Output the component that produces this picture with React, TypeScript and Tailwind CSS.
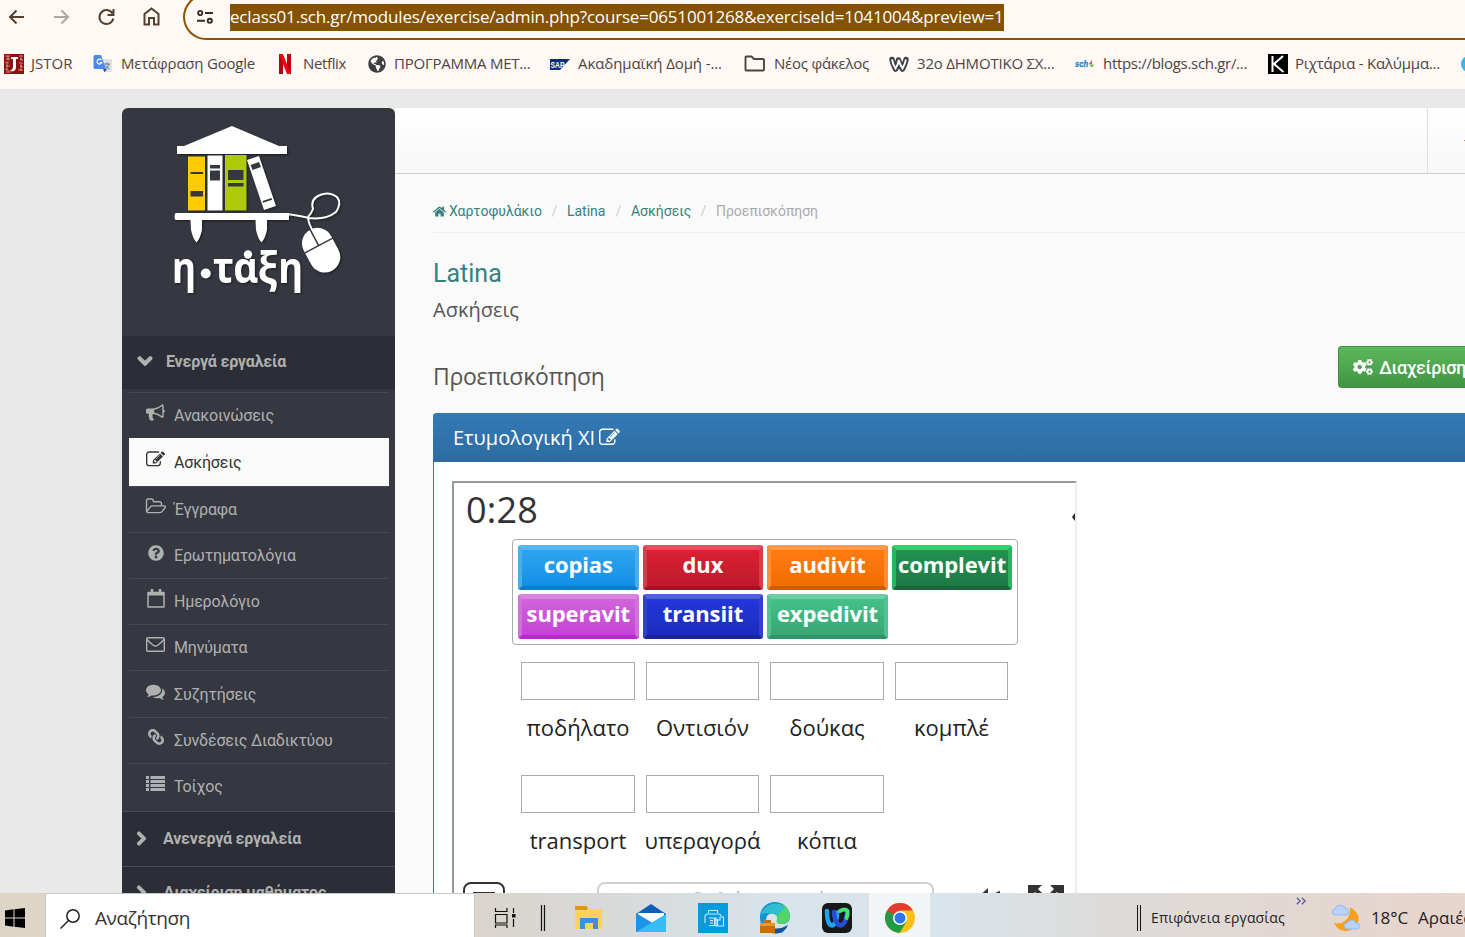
import { FaQuestionCircle, FaChevronDown, FaChevronRight, FaHome, FaCogs, FaLink, FaGlobeAmericas } from 'react-icons/fa';

const PENCIL =
  'M888 1184l116-116-152-152-116 116v56h96v96h56zm440-720q-16-16-33 1l-350 350q-17 17-1 33t33-1l350-350q17-17 1-33zm80 594v190q0 119-84.5 203.5t-203.5 84.5h-832q-119 0-203.5-84.5t-84.5-203.5v-832q0-119 84.5-203.5t203.5-84.5h832q63 0 117 25 15 7 18 23 3 17-9 29l-49 49q-14 14-32 8-23-6-45-6h-832q-66 0-113 47t-47 113v832q0 66 47 113t113 47h832q66 0 113-47t47-113v-126q0-13 9-22l64-64q15-15 35-7t20 29zm-96-738l288 288-672 672h-288v-288zm444 132l-92 92-288-288 92-92q28-28 68-28t68 28l152 152q28 28 28 68t-28 68z';
const BULLHORN =
  'M1664 640q53 0 90.5 37.5t37.5 90.5-37.5 90.5-90.5 37.5v384q0 52-38 90t-90 38q-417-347-812-380-58 19-91 66t-31 100.5 40 92.5q-20 33-23 65.5t6 58 33.5 55 48 50 61.5 50.5q-29 58-111.5 83t-168.5 11.5-132-55.5q-7-23-29.5-87.5t-32-94.5-23-89-15-101 3.5-98.5 22-110.5h-122q-66 0-113-47t-47-113v-192q0-66 47-113t113-47h480q435 0 896-384 52 0 90 38t38 90v384zm-128 604v-954q-394 302-768 343v270q377 42 768 341z';
const FOLDER =
  'M1845 931q0-35-53-35h-1088q-40 0-85.5 21.5t-71.5 52.5l-294 363q-18 24-18 40 0 35 53 35h1088q40 0 86-22t71-53l294-363q18-22 18-39zm-1141-163h768v-160q0-40-28-68t-68-28h-576q-40 0-68-28t-28-68v-64q0-40-28-68t-68-28h-320q-40 0-68 28t-28 68v853l256-315q44-53 116-87.5t140-34.5zm1269 163q0 62-46 120l-295 363q-43 53-116 87.5t-140 34.5h-1088q-92 0-158-66t-66-158v-960q0-92 66-158t158-66h320q92 0 158 66t66 158v32h544q92 0 158 66t66 158v160h192q54 0 99 24.5t67 70.5q15 32 15 68z';
const COMMENTS =
  'M1408 768q0 139-94 257t-256.5 186.5-353.5 68.5q-86 0-176-16-124 88-278 128-36 9-86 16h-3q-11 0-20.5-8t-11.5-21q-1-3-1-6.5t.5-6.5 2-6l2.5-5 3.5-5.5 4-5 4.5-5 4-4.5q5-6 23-25t26-29.5 22.5-29 25-38.5 20.5-44q-124-72-195-177t-71-224q0-139 94-257t256.5-186.5 353.5-68.5 353.5 68.5 256.5 186.5 94 257zm384 256q0 120-71 224.5t-195 176.5q10 24 20.5 44t25 38.5 22.5 29 26 29.5 23 25q1 1 4 4.5t4.5 5 4 5 3.5 5.5l2.5 5 2 6 .5 6.5-1 6.5q-3 14-13 22t-22 7q-50-7-86-16-154-40-278-128-90 16-176 16-271 0-472-132 58 4 88 4 161 0 309-45t264-129q125-92 192-212t67-254q0-77-23-152 129 71 204 178t75 230z';

function Glyph({ d, vb = '0 0 1792 1792', c = 'w-[19px] h-[19px]' }: { d: string; vb?: string; c?: string }) {
  return <svg viewBox={vb} className={c} fill="currentColor"><path d={d} /></svg>;
}

const bookmarks = [
  { w: 'w-[89px]', p: 'w-[27px]', ls: '', t: 'JSTOR', i: (
    <svg viewBox="0 0 20 20" className="w-5 h-5"><rect width="20" height="20" fill="#8c1014" /><g stroke="#e5b5a8" strokeWidth="1" fill="none" opacity=".75"><path d="M1 2h5M2 5h4M1 8l4 1M2 12h4M1 15l4 2M15 2h4M16 5l3 1M15 9h4M16 12l3 1M14 16h5M2 18h5M4 2v5M17 3v4M3 9v7M17 10v7" /></g><path d="M7 3h7v2h-2v8q0 4-4 4.500l-2-1q3-1 3-4V5H7z" fill="#fff" /></svg>) },
  { w: 'w-[183px]', p: 'w-[28px]', ls: 'tracking-[-0.21px]', t: 'Μετάφραση Google', i: (
    <svg viewBox="0 0 20 20" className="w-5 h-5"><path d="M8 5h10q1 0 1 1v11q0 1-1 1h-6z" fill="#e0e0e0" /><path d="M11 10h6M14 8.500v2M16 10q-1 4-4 5M12.500 11.500q1 2 4 3.500" stroke="#607d8b" fill="none" /><path d="M2 1h6l5 14H2q-1.500 0-1.500-1.500v-11Q.5 1 2 1z" fill="#4a87ee" /><path d="M10 15h4l-2.500 3.500z" fill="#3a4fb5" /><path d="M8.500 6a2.500 2.500 0 1 0 .4 2.500H6.500" stroke="#fff" strokeWidth="1.200" fill="none" /></svg>) },
  { w: 'w-[92px]', p: 'w-[27px]', ls: 'tracking-[-0.36px]', t: 'Netflix', i: (
    <svg viewBox="0 0 20 20" className="w-5 h-5"><path d="M3 0h4v20l-4 .4zM11 0h4v20.400l-4-.4z" fill="#b1060f" /><path d="M3 0h4l8 20.400-4-.4z" fill="#e50914" /></svg>) },
  { w: 'w-[182px]', p: 'w-[26px]', ls: 'tracking-[-0.24px]', t: 'ΠΡΟΓΡΑΜΜΑ ΜΕΤ...', i: <FaGlobeAmericas className="w-[18px] h-[18px] text-[#3c4043]" /> },
  { w: 'w-[194px]', p: 'w-[28px]', ls: 'tracking-[-0.1px]', t: 'Ακαδημαϊκή Δομή -...', i: (
    <svg viewBox="0 0 20 11" className="w-5 h-[11px]"><path d="M0 0h20L10 11H0z" fill="#0b2a8c" /><text x="0.500" y="8.500" fontSize="8.500" fontWeight="bold" fill="#fff" fontFamily="Liberation Sans" textLength="14" lengthAdjust="spacingAndGlyphs">SAP</text></svg>) },
  { w: 'w-[145px]', p: 'w-[30px]', ls: 'tracking-[-0.24px]', t: 'Νέος φάκελος', i: (
    <svg viewBox="0 0 22 18" className="w-[22px] h-[18px]" fill="none" stroke="#4d4540" strokeWidth="1.900"><path d="M1.500 14.500v-12q0-1 1-1h5l2.500 2.500h9q1 0 1 1v9.500q0 1-1 1H2.500q-1 0-1-1z" /></svg>) },
  { w: 'w-[186px]', p: 'w-[28px]', ls: 'tracking-[-0.2px]', t: '32ο ΔΗΜΟΤΙΚΟ ΣΧ...', i: (
    <svg viewBox="0 0 20 16" className="w-5 h-4" fill="none" stroke="#3d4247"><path d="M3 3.500q1 5 3.500 9.500Q9 9 9.500 4Q11 9 13.500 13q2.500-4.500 3.500-9.500" strokeWidth="5.500" strokeLinejoin="round" strokeLinecap="round" /><path d="M3 3.500q1 5 3.500 9Q9 9 9.700 4Q11 9 13.500 12.500q2.500-4.500 3.500-9" stroke="#fff" strokeWidth="1.900" /></svg>) },
  { w: 'w-[193px]', p: 'w-[28px]', ls: 'tracking-[-0.31px]', t: 'https://blogs.sch.gr/...', i: (
    <svg viewBox="0 0 20 10" className="w-5 h-[10px]"><text x="0" y="8" fontSize="9" fontStyle="italic" fontWeight="bold" fill="#1c86c0" stroke="#1c86c0" strokeWidth=".3" fontFamily="Liberation Sans" textLength="13" lengthAdjust="spacingAndGlyphs">sch</text><path d="M14 5l3-4v4z" fill="#e8503a" /><path d="M14 5.500h5l-2 3z" fill="#6db33f" /></svg>) },
  { w: 'w-[193px]', p: 'w-[27px]', ls: 'tracking-[-0.21px]', t: 'Ριχτάρια - Καλύμμα...', i: (
    <svg viewBox="0 0 20 20" className="w-5 h-5"><rect width="20" height="20" fill="#000" /><path d="M4.500 2v16M15 2L6 10l9.500 8" stroke="#fff" strokeWidth="2" fill="none" /></svg>) },
];

const items = [
  { t: 'Ανακοινώσεις', i: <Glyph d={BULLHORN} /> },
  { t: 'Ασκήσεις', active: true, i: <Glyph d={PENCIL} /> },
  { t: 'Έγγραφα', i: <Glyph d={FOLDER} vb="0 0 2048 1792" c="w-[22px] h-[19px] shrink-0" /> },
  { t: 'Ερωτηματολόγια', i: <FaQuestionCircle className="w-4 h-4" /> },
  { t: 'Ημερολόγιο', i: (
    <svg viewBox="0 0 18 19" className="w-[18px] h-[19px]" fill="none" stroke="currentColor"><path d="M1 3.500h16v14.500H1z" strokeWidth="1.500" strokeLinejoin="round" /><path d="M1 5h16" strokeWidth="3" /><path d="M5 .8v4M13 .8v4" strokeWidth="2.600" strokeLinecap="round" /></svg>) },
  { t: 'Μηνύματα', i: (
    <svg viewBox="0 0 19 15" className="w-[19px] h-[15px]" fill="none" stroke="currentColor" strokeWidth="1.400"><rect x=".7" y=".7" width="17.600" height="13.600" rx="1.200" /><path d="M1 2.500Q3 5 7 8q2.500 2.200 5 0 4-3 6-5.500" /></svg>) },
  { t: 'Συζητήσεις', i: <Glyph d={COMMENTS} /> },
  { t: 'Συνδέσεις Διαδικτύου', i: <FaLink className="w-4 h-4 -scale-x-100" /> },
  { t: 'Τοίχος', i: (
    <svg viewBox="0 0 19 15" className="w-[19px] h-[15px]" fill="currentColor"><path d="M0 0h3v3H0zM4.500 0H19v3H4.500zM0 4h3v3H0zM4.500 4H19v3H4.500zM0 8h3v3H0zM4.500 8H19v3H4.500zM0 12h3v3H0zM4.500 12H19v3H4.500z" /></svg>) },
];

const tiles = [
  { t: 'copias', c: 'from-[#2fa3ef] to-[#1090e6] border-t-[#58b6f2] border-x-[#49aeee] border-b-[#0f7ccb]' },
  { t: 'dux', c: 'from-[#dd1f33] to-[#bd1b2d] border-t-[#e74d5e] border-x-[#db3a4b] border-b-[#a01524]' },
  { t: 'audivit', c: 'from-[#ff7c12] to-[#f26c00] border-t-[#ff9a48] border-x-[#ff8d33] border-b-[#d05c00]' },
  { t: 'complevit', c: 'from-[#239150] to-[#1e7a44] border-t-[#33d06d] border-x-[#29b55d] border-b-[#1a6539]' },
  { t: 'superavit', c: 'from-[#d063da] to-[#c543d6] border-t-[#da84e2] border-x-[#d172dc] border-b-[#b928cf]' },
  { t: 'transiit', c: 'from-[#2237dd] to-[#1c2dba] border-t-[#4f5fe5] border-x-[#3040d4] border-b-[#17249a]' },
  { t: 'expedivit', c: 'from-[#45c088] to-[#38a775] border-t-[#6bcfa2] border-x-[#4fc491] border-b-[#2f9468]' },
];
const targets = ['ποδήλατο', 'Οντισιόν', 'δούκας', 'κομπλέ', 'transport', 'υπεραγορά', 'κόπια'];

function Logo() {
  return (
    <svg viewBox="120 100 280 240" className="w-[280px] h-[240px] shrink-0 -mt-2 -ml-0.5 drop-shadow-[1px_1px_1px_rgba(0,0,0,.5)]">
      <path d="M177 146h7l48-20 47 20h8v8H177z" fill="#fff" />
      <rect x="188" y="156.500" width="17" height="54" fill="#ffcb05" /><path d="M190.500 172h12.500v2h-12.500zM190.500 191h12.500v5.500h-12.500z" fill="#363841" />
      <rect x="207.500" y="155.500" width="15" height="55" fill="#fff" /><path d="M210 165h10v3.500h-10zM210 170.500h10v10h-10z" fill="#363841" />
      <rect x="225" y="155" width="21.500" height="55.500" fill="#afca0b" /><path d="M228 170h15.500v10H228zM228 183h15.500v3.500H228z" fill="#363841" />
      <path d="M247 160l12-4 17 50-12 4z" fill="#fff" /><path d="M250.500 165l8.500-3 2 5-8.500 3zM262.500 201l9-3 .6 1.800-9 3z" fill="#363841" />
      <path d="M175.500 213H289v7H175.500q-2-3.500 0-7zM190.500 220H202v10q-2 9-5.500 12.500Q193 239 191 230zM255.500 220H267v10q-2 9-5.500 12.500Q258 239 256 230z" fill="#fff" />
      <path d="M287 214q14 2 22 4 17 2 27-6 6-9 1-15-8-6-17-2-10 4-7 14-2 5-5 8 0 6 6 16" stroke="#fff" strokeWidth="2" fill="none" />
      <g transform="rotate(-28 321 250)"><rect x="305.500" y="227" width="31" height="46.500" rx="15.500" fill="#fff" /><path d="M305 245h32M321 226v19" stroke="#363841" strokeWidth="1.500" /></g>
      <g fill="#fff" fontFamily="Noto Sans" fontWeight="700">
        <text x="172" y="282.500" fontSize="43" textLength="24" lengthAdjust="spacingAndGlyphs">η</text>
        <circle cx="205.800" cy="273.500" r="5" />
        <text x="213" y="282.500" fontSize="43" textLength="90" lengthAdjust="spacingAndGlyphs">ταξη</text>
        <circle cx="248" cy="254.500" r="4.200" />
      </g>
    </svg>
  );
}

export default function App() {
  return (
    <div className="flex h-[937px] w-[1465px] flex-col overflow-hidden whitespace-nowrap bg-[#e9e9e9] font-['Roboto',sans-serif]">
      <header className="h-[89px] shrink-0 bg-[#fff8f5] font-['Open_Sans',sans-serif]">
        <div className="flex h-10 items-start">
          <div className="flex h-[33px] w-[183px] items-center text-[#54402f]">
            <svg viewBox="0 0 183 33" className="h-[33px] w-[183px]" fill="none" stroke="currentColor" strokeWidth="2">
              <path d="M24 17H10.500M16.500 10.500L10 17l6.500 6.500" />
              <path d="M54 17h13.500M61.500 10.500L68 17l-6.500 6.500" stroke="#b0a5a0" />
              <path d="M112.500 13.500a7 7 0 1 0 .8 5M113.500 9v6h-6" />
              <path d="M144.500 24.500V14l7-5.500 7 5.500v10.500h-4.500v-6.500h-5v6.500z" />
            </svg>
          </div>
          <div className="-mt-[6px] flex h-[46px] flex-1 items-center rounded-l-[23px] border-2 border-r-0 border-[#8a5500] pl-3">
            <svg viewBox="0 0 16 16" className="mr-[17px] h-4 w-4" fill="none" stroke="#3a2c20" strokeWidth="1.900"><circle cx="3.200" cy="4" r="2.100" /><path d="M8 4h8M0 11.800h8" /><circle cx="12.800" cy="11.800" r="2.100" /></svg>
            <span className="mt-px flex h-[27px] w-[774px] items-center bg-[#855200] pb-0.5 text-[17px] tracking-[-0.18px] text-white">
              eclass01.sch.gr/modules/exercise/admin.php?course=0651001268&amp;exerciseId=1041004&amp;preview=1
            </span>
          </div>
        </div>
        <div className="flex h-12 items-center pl-1 text-[15px] text-[#4d4540]">
          {bookmarks.map((b) => (
            <div key={b.t} className={`flex shrink-0 items-center ${b.w}`}>
              <span className={`flex shrink-0 ${b.p}`}>{b.i}</span>
              <span className={`-mt-0.5 ${b.ls}`}>{b.t}</span>
            </div>
          ))}
          <span className="h-4 w-4 shrink-0 rounded-full bg-[#35b6e6]" />
        </div>
      </header>

      <div className="flex h-[804px] shrink-0 overflow-hidden pl-[122px] pt-[19px]">
        <aside className="flex w-[273px] shrink-0 flex-col overflow-hidden rounded-t-md bg-[#363841] text-[#b0b0b0]">
          <div className="h-[228px] shrink-0 overflow-hidden"><Logo /></div>
          <div className="flex h-[53px] shrink-0 items-center bg-[#2b2e36] pb-0.5 pl-[15px] text-base font-bold tracking-[-0.2px]">
            <FaChevronDown className="mb-0.5 mr-[13px] h-4 w-4" stroke="currentColor" strokeWidth="50" />
            Ενεργά εργαλεία
          </div>
          <nav className="flex h-[423px] shrink-0 flex-col border-b border-[#4a4d55] px-[7px] pr-[6px] pt-[3px]">
            {items.map((it) => (
              <div key={it.t} className={`flex shrink-0 items-center border-t pl-[17px] text-base tracking-[-0.17px] ${it.active ? 'h-12 border-[#fafafa] bg-[#fafafa] text-[#333]' : 'h-[46.100px] border-[#45484f]'}`}>
                <span className="mb-1.5 flex w-7 shrink-0"><span className="flex w-[19px] justify-center">{it.i}</span></span>
                <span className="mt-px">{it.t}</span>
              </div>
            ))}
          </nav>
          <div className="flex h-[55px] shrink-0 items-center border-b border-[#4a4d55] bg-[#2b2e36] pb-px pl-3 text-base font-bold tracking-[-0.2px]">
            <FaChevronRight className="mr-[14px] h-[15px] w-[15px]" stroke="currentColor" strokeWidth="50" />
            Ανενεργά εργαλεία
          </div>
          <div className="flex h-[55px] shrink-0 items-center bg-[#2b2e36] pb-1 pl-3 text-base font-bold tracking-[-0.2px]">
            <FaChevronRight className="mr-[14px] h-[15px] w-[15px]" stroke="currentColor" strokeWidth="50" />
            Διαχείριση μαθήματος
          </div>
        </aside>

        <main className="flex w-[1070px] shrink-0 flex-col bg-[#fafafa]">
          <div className="flex h-[66px] shrink-0 justify-end border-b border-[#d0d0d0] bg-gradient-to-b from-white to-[#f7f7f7]">
            <div className="flex w-[38px] items-center justify-end border-l border-[#e0e0e0]"><span className="h-px w-px bg-[#b98b5e]" /></div>
          </div>
          <div className="flex flex-1 flex-col pl-[38px]">
            <div className="flex h-[59px] items-center border-b border-[#eee] pt-4 text-sm text-[#35827f]">
              <FaHome className="mr-[3px] h-[13px] w-[13px]" />
              <span>Χαρτοφυλάκιο</span>
              <span className="w-[25px] text-center text-[#ccc]">/</span>
              <span className="w-[39px]">Latina</span>
              <span className="w-[25px] text-center text-[#ccc]">/</span>
              <span className="w-[60px]">Ασκήσεις</span>
              <span className="w-[25px] text-center text-[#ccc]">/</span>
              <span className="text-[#aaa]">Προεπισκόπηση</span>
            </div>
            <h1 className="mt-[25px] h-8 text-[25px] leading-8 text-[#35827f]">Latina</h1>
            <h2 className="mt-1 h-8 font-['Open_Sans',sans-serif] text-xl leading-8 text-[#555]">Ασκήσεις</h2>
            <div className="mt-5 flex h-[42px] justify-between">
              <h3 className="mt-2 font-['Open_Sans',sans-serif] text-[23px] leading-[44px] tracking-[-0.3px] text-[#555]">Προεπισκόπηση</h3>
              <button className="flex w-[127px] items-center overflow-hidden rounded-l border border-r-0 border-[#3e8f3e] bg-gradient-to-b from-[#5cb85c] to-[#419641] pl-[14px] text-[18px] font-medium tracking-[-0.4px] text-white">
                <FaCogs className="mr-[6px] h-5 w-5 shrink-0" />
                Διαχείριση
              </button>
            </div>
            <section className="mt-[25px] flex flex-1 flex-col rounded-tl border-l border-[#337ab7] bg-white">
              <div className="-ml-px flex h-[49px] shrink-0 items-center rounded-tl border-b border-[#2e6da4] bg-gradient-to-b from-[#337ab7] to-[#2d6ca2] pl-5 pt-0.5 font-['Open_Sans',sans-serif] text-xl text-white">
                Ετυμολογική XI
                <Glyph d={PENCIL} c="mb-0.5 ml-1 h-[21px] w-[21px]" />
              </div>
              <div className="ml-[18px] mt-[19px] flex w-[625px] flex-1 flex-col overflow-hidden border-2 border-b-0 border-[#999] border-r-[#eee] bg-white font-['Open_Sans',sans-serif]">
                <div className="flex h-14 shrink-0 items-center justify-between pl-3 text-[36px] font-medium tracking-[0.2px] text-[#333]">
                  <span className="-mt-0.5">0:28</span>
                  <svg viewBox="0 0 3 8" className="mt-3 h-2 w-[3px]"><path d="M3 0v8L0 4z" fill="#222" /></svg>
                </div>
                <div className="ml-[58px] grid h-[106px] w-[506px] shrink-0 grid-cols-[repeat(4,120.600px)] grid-rows-[45px_45px] gap-x-1 gap-y-1 rounded-[4px] border border-[#aaa] p-[5px]">
                  {tiles.map((x) => (
                    <div key={x.t} className={`flex items-center justify-center rounded-[3px] border-4 border-t-[5px] bg-gradient-to-b pb-2 text-[22px] font-bold leading-none tracking-[-0.1px] text-white ${x.c}`}>
                      {x.t}
                    </div>
                  ))}
                </div>
                <div className="ml-[67.500px] mt-[17px] grid w-[512px] shrink-0 grid-cols-[repeat(4,124.500px)] grid-rows-[113px_113px]">
                  {targets.map((t) => (
                    <div key={t} className="flex w-[113px] flex-col items-center">
                      <div className="h-[38px] w-[113.500px] shrink-0 border border-[#aaa]" />
                      <div className="mt-[11.500px] flex h-8 items-center text-[22px] text-[#222]">{t}</div>
                    </div>
                  ))}
                </div>
                <div className="-mt-[6px] flex h-[60px] shrink-0 items-start pl-[9px]">
                  <svg viewBox="0 0 42 42" className="h-[42px] w-[42px]" fill="none" stroke="#333"><rect x="1" y="1" width="40" height="40" rx="7" strokeWidth="2" /><path d="M10 11h22" strokeWidth="2" /></svg>
                  <div className="ml-[92px] h-[44px] w-[337px] rounded-lg border-2 border-[#d0d0d0] text-center text-[22px] leading-[33px] tracking-[0.1px] text-[#bbb]">Υποβολή απαντήσεων</div>
                  <svg viewBox="0 0 90 40" className="ml-11 h-10 w-[90px]" fill="#333"><path d="M0 15L10 6v30L0 27zM18 10l4-1v6zM50 3h14l-4 4 6 6-3 3-6-6-3.500 3.500V18H50zM86 3H72l4 4-6 6 3 3 6-6 3.500 3.500V18H86z" /></svg>
                </div>
              </div>
            </section>
          </div>
        </main>
      </div>

      <footer className="flex h-11 shrink-0 items-center bg-[linear-gradient(90deg,#dfd5c7_0%,#dad4cc_32%,#d8d8d6_40%,#d9e3ea_53%,#dae4eb_64%,#dddbd9_76%,#e3d7d1_90%,#e8d5cc_100%)] font-['Open_Sans',sans-serif] text-[#222]">
        <div className="flex w-[45px] shrink-0 pl-[5px]"><svg viewBox="0 0 20 20" className="mt-1.5 h-5 w-5"><path d="M0 2.500L8.500 1.300v8.200H0zM9.500 1.200L20 0v9.500H9.500zM0 10.500h8.500v8.200L0 17.500zM9.500 10.500H20V20L9.500 18.800z" /></svg></div>
        <div className="flex h-11 w-[430px] shrink-0 items-center border border-b-0 border-[#c8c8c8] bg-white pl-[14px] pt-1.5 text-[19px] tracking-[-0.4px] text-[#333]">
          <svg viewBox="0 0 20 20" className="mr-[15px] h-5 w-5" fill="none" stroke="#222" strokeWidth="1.500"><circle cx="13" cy="7" r="6.200" /><path d="M8.500 11.500L.5 19.500" /></svg>
          Αναζήτηση
        </div>
        <svg viewBox="475 893 394 44" className="h-11 w-[394px] shrink-0">
          <g fill="none" stroke="#111" strokeWidth="1.200"><path d="M495.500 908v3.500h11.500v-3.500M495.500 914.500h11.500v8.500h-11.500zM495.500 928v-3h11.500v3M513.500 908v5M513.500 919v8M541.500 905v26M544.500 905v26" /></g><rect x="512" y="914" width="3.500" height="3.500" fill="#111" />
          <path d="M575 906h11l2 3h14v20h-27z" fill="#ffd35a" /><path d="M575 906h11l2 2-1 2h-12z" fill="#dc9a0b" /><path d="M580 929v-11h18v11h-5v-6h-8v6z" fill="#3a91dc" />
          <path d="M636 914l15-10 15 10v17h-30z" fill="#0f60b5" /><path d="M638 913h26v8l-13 9-13-9z" fill="#fff" /><path d="M636 913l20 12-8 7h-12z" fill="#1d93e8" /><path d="M666 914v18h-30z" fill="#35bdf5" />
          <rect x="698" y="903" width="30" height="30" fill="#0599de" /><g fill="none" stroke="#cceefa" strokeWidth="1.100"><path d="M708.500 913v-2.500h9v2.500M705 923v-6q0-3 3-3h10q3 0 3 2M709 918h5.500v7.500h-5.500M716.500 920h-2M716 926v-8h-3M716 925.500h-3M717.500 918.500v7M720 917h3.500v9H716v-6h4zM710 920.500h3M710 923h3" /></g>
          <path d="M760 918a15 15 0 0 1 30-2q0 8-8 8-6 0-5-4 1-6-4-7-8 1-7 9 3 10 18 10-12 4-20-3-4-4-4-11z" fill="#1593d8" /><path d="M772 904q15-2 18 11 0 9-9 9-6 0-4-5 1-6-7-6z" fill="#52d468" /><path d="M761 914q5-11 15-10 6 0 9 4-5 3-7 8-8-5-17-2z" fill="#30bdd0" /><path d="M772 928q8 2 16-3-3 7-9 8-5 1-8-1z" fill="#10529b" /><path d="M760 923h4v-3h7v3h4v10h-15z" fill="#c4700c" /><path d="M760 923h15v3h-15z" fill="#e79a22" />
          <rect x="822" y="903" width="30" height="30" rx="6" fill="#161819" /><path d="M827 911q0 14 5 14.500 5-1 5-13" fill="none" stroke="#1ca5f2" strokeWidth="4.500" strokeLinecap="round" /><path d="M834 912q1 13 7 13.500 5-2 6-12" fill="none" stroke="#254fd8" strokeWidth="4.500" strokeLinecap="round" /><path d="M840 911q5-3 7.500 0 .5 3-1 7" fill="none" stroke="#46e26f" strokeWidth="4" strokeLinecap="round" />
        </svg>
        <div className="flex h-11 w-[61px] shrink-0 items-center justify-center bg-[#f1f5f8] pt-1.5">
          <svg viewBox="0 0 30 30" className="h-[30px] w-[30px]"><circle cx="15" cy="15" r="15" fill="#fbc116" /><path d="M2 7.500A15 15 0 0 0 14.500 30L21.500 18.700 15 15z" fill="#229a48" /><path d="M2 7.500A15 15 0 0 1 28 7.500H15L8.500 18z" fill="#e33b2e" /><path d="M2 7.500L9 19l6-4z" fill="#229a48" /><circle cx="15" cy="15" r="7" fill="#fff" /><circle cx="15" cy="15" r="5.500" fill="#2d78e8" /></svg>
        </div>
        <div className="flex h-11 w-[535px] shrink-0 items-center overflow-hidden pl-[207px] pt-1.5">
          <span className="mr-[10px] h-[26px] w-1 shrink-0 border-x border-[#111]" />
          <span className="w-[134px] shrink-0 text-sm tracking-[0.17px]">Επιφάνεια εργασίας</span>
          <svg viewBox="0 0 12 10" className="mb-[34px] ml-[11px] h-[10px] w-[10px] shrink-0" fill="none" stroke="#5d5aa6" strokeWidth="1.600"><path d="M1 1l4 4-4 4M7 1l4 4-4 4" /></svg>
          <svg viewBox="0 0 30 28" className="ml-[25px] mr-[10px] h-7 w-[30px] shrink-0"><path d="M19 3q10 6 8.500 14Q23 27 14 27 6 26 3 19q7 2 12-3 5-5 4-13z" fill="#f6a01c" /><path d="M4 11q-4-1-3-4 1-2 3-2 1-4 5-4 4 0 5 3 4 0 4 3.500Q18 11 15 11zM16 25q-3-1-3-3 0-3 3-3 1-3 5-3 3 0 4 3 4 0 4 3 0 3-3 3z" fill="#b8d2fb" stroke="#8aaee8" strokeWidth=".7" /></svg>
          <span className="text-[17px] tracking-[-0.1px]">18°C</span>
          <span className="ml-[10px] text-[17px]">Αραιές</span>
        </div>
      </footer>
    </div>
  );
}
